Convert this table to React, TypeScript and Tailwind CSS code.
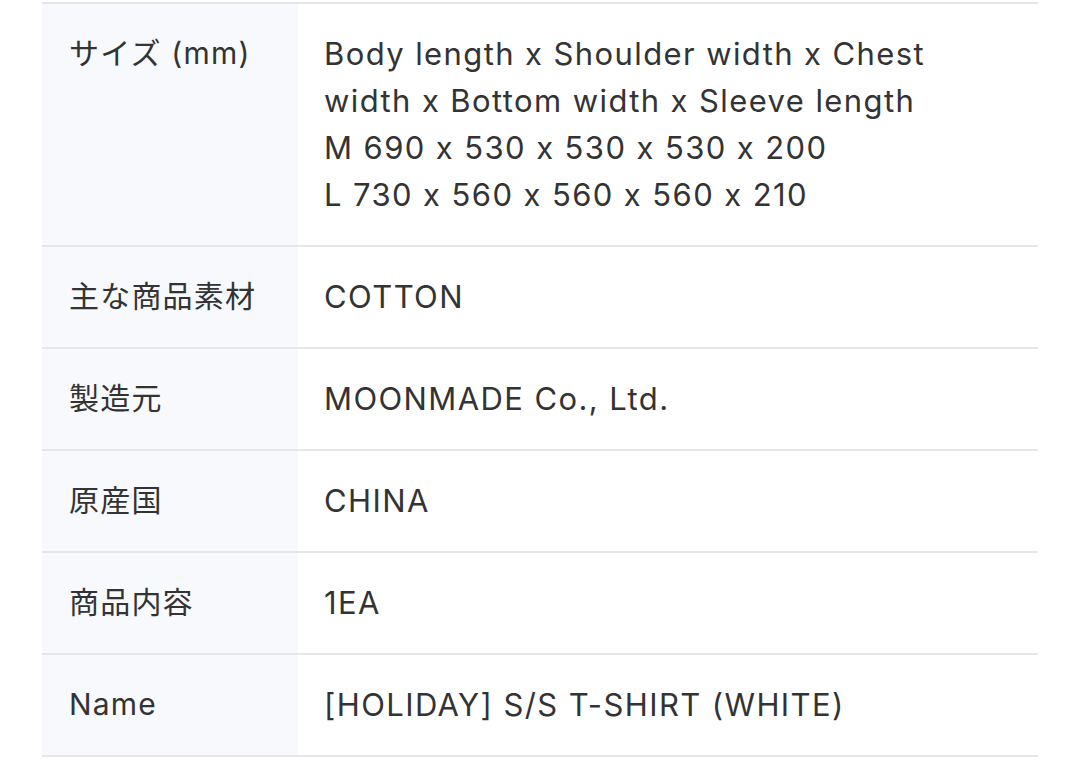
const rows: { label: string; value: string[] }[] = [
  {
    label: 'サイズ (mm)',
    value: [
      'Body length x Shoulder width x Chest',
      'width x Bottom width x Sleeve length',
      'M 690 x 530 x 530 x 530 x 200',
      'L 730 x 560 x 560 x 560 x 210',
    ],
  },
  { label: '主な商品素材', value: ['COTTON'] },
  { label: '製造元', value: ['MOONMADE Co., Ltd.'] },
  { label: '原産国', value: ['CHINA'] },
  { label: '商品内容', value: ['1EA'] },
  { label: 'Name', value: ['[HOLIDAY] S/S T-SHIRT (WHITE)'] },
];

export default function App() {
  return (
    <div
      className="min-h-[764px] bg-white pt-[2px] px-[42px] text-[#333333] text-[30px] leading-[47px]"
      style={{ fontFamily: 'Inter, "Noto Sans CJK JP", sans-serif' }}
    >
      <div className="border-t-2 border-[#e6e6e8]">
        {rows.map((row) => (
          <div key={row.label} className="flex border-b-2 border-[#e6e6e8]">
            <div className="w-[256px] shrink-0 bg-[#f7f9fc] pl-[27px] pt-[26px] pb-[27px] tracking-[1.2px]">
              {row.label}
            </div>
            <div className="flex-1 pl-[26px] pt-[26px] pb-[27px] text-[31px] tracking-[1.4px]">
              {row.value.map((line) => (
                <div key={line}>{line}</div>
              ))}
            </div>
          </div>
        ))}
      </div>
    </div>
  );
}
